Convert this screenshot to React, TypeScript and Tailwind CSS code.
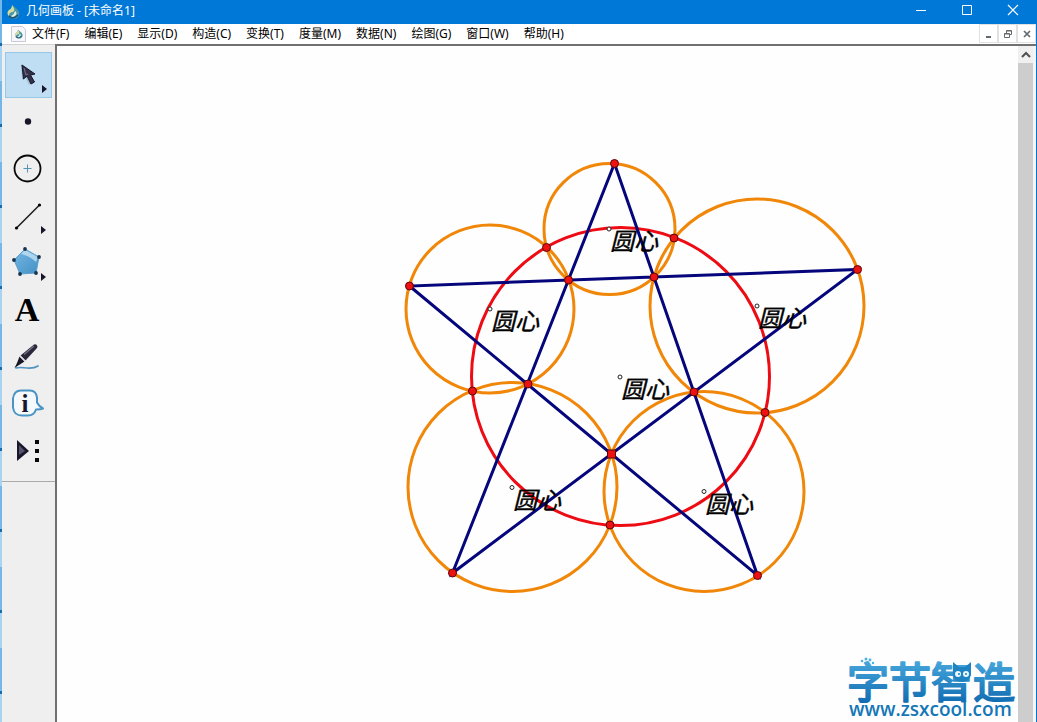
import React from "react";

const menus = ["文件(F)", "编辑(E)", "显示(D)", "构造(C)", "变换(T)", "度量(M)", "数据(N)", "绘图(G)", "窗口(W)", "帮助(H)"];

const circles = [
  { cx: 609.5, cy: 229, r: 65.5 },
  { cx: 490, cy: 309, r: 84 },
  { cx: 757, cy: 306, r: 107 },
  { cx: 512.5, cy: 487, r: 104.5 },
  { cx: 704, cy: 491.5, r: 100 },
];

const points = [
  [614.5, 163.5], [546.5, 247.5], [674, 238], [568.5, 280], [654, 277],
  [409.5, 286], [857.5, 269.5], [472.5, 391], [528, 384], [694, 392],
  [765, 412.5], [610, 525], [452.5, 573], [757.5, 575.5],
];

const centers = [
  [609, 229], [490, 309], [757, 306], [620, 377], [512, 487.5], [704, 491.5],
];

function Globe() {
  return (
    <g>
      <path d="M6 1Q10 4 12 6Q15 10 11 14Q7 16 3 13Q0 9 3 6Q6 5 6 1Z" fill="#4c95a8" />
      <path d="M6 1Q10 6 7 8Q3 8 3 12Q0 9 3 6Q6 5 6 1Z" fill="#d2df9c" />
      <path d="M9 7Q12 9 9 12Q6 14 5 12Q8 11 9 7Z" fill="#e1f0e5" />
      <path d="M3 12Q7 16 12 11" fill="none" stroke="#214f68" strokeWidth="1.3" />
    </g>
  );
}

const tools: { name: string; art: React.ReactNode }[] = [
  {
    name: "移动箭头工具",
    art: (
      <g>
        <path d="M16 12l1 16 3-3 4 8 4-2-4-7 5-1z" fill="#8badc2" opacity=".55" />
        <path d="M17 13l1.500 14 3.500-3 4 8 3.500-2-4-7 4.500-1z" fill="#33314a" stroke="#161526" strokeWidth="1" />
        <path d="M19 16l2 7 2-1" fill="none" stroke="#77748b" strokeWidth="1" />
        <path d="M37 33v8l5-4z" fill="#17172b" />
      </g>
    ),
  },
  { name: "点工具", art: <circle cx="23" cy="22.500" r="3.200" fill="#18172a" /> },
  {
    name: "圆工具",
    art: (
      <g fill="none">
        <circle cx="22.500" cy="22.500" r="13" stroke="#080808" strokeWidth="1.800" />
        <path d="M18.500 22.500h8m-4-4v8" stroke="#5793b2" strokeWidth="1" />
      </g>
    ),
  },
  {
    name: "线段直尺工具",
    art: (
      <g>
        <path d="M11.500 35L34.500 12" stroke="#161616" strokeWidth="1.400" />
        <circle cx="11.500" cy="35" r="1.600" />
        <circle cx="34.500" cy="12" r="1.600" />
        <path d="M36 33v8l5-4z" fill="#17172b" />
      </g>
    ),
  },
  {
    name: "多边形工具",
    art: (
      <g>
        <path d="M20 9L34 17l-3 16-16 1L9 20z" fill="url(#polygonBlue)" stroke="#5b9fce" strokeWidth="1" />
        <path d="M20 10l13 7-2 5q-8-7-15-8z" fill="#d1e9f8" opacity=".7" />
        {[[20, 9], [34, 17], [31, 33], [15, 34], [9, 20]].map(([x, y]) => (
          <circle key={x} cx={x} cy={y} r="1.900" fill="#17334d" />
        ))}
        <path d="M36 33v8l5-4z" fill="#17172b" />
      </g>
    ),
  },
  {
    name: "文本工具",
    art: (
      <text x="22" y="34" textAnchor="middle" className="fill-black font-['Liberation_Serif',serif] text-[34px] font-bold">A</text>
    ),
  },
  {
    name: "标记工具",
    art: (
      <g>
        <path d="M11 34q4-1 11 0 7 .500 11-2" fill="none" stroke="#5194bf" strokeWidth="1.700" strokeLinecap="round" />
        <path d="M29 10.500q2-1 3 1 1 1 0 2.500L20.500 26.500l-5-5z" fill="#2a283a" />
        <path d="M14.500 22.500l5 5-5.500 3.500-4.500 3 2.500-5z" fill="#171725" />
        <path d="M15 22l5 5" stroke="#e5e5ea" strokeWidth="1.200" />
        <path d="M19 20.500L29 12" stroke="#77748b" strokeWidth="1.200" />
      </g>
    ),
  },
  {
    name: "信息工具",
    art: (
      <g>
        <path d="M16 9.500h9q6 0 7 7v5q2 4 6 6-2 1-7 1-2 6-8 6h-6q-8 0-9-8v-9q1-8 8-8z" fill="#f6f9fb" stroke="#4994c5" strokeWidth="2" strokeLinejoin="round" />
        <text x="20" y="31" textAnchor="middle" className="fill-[#17172b] font-['Liberation_Serif',serif] text-[25px] font-bold">i</text>
      </g>
    ),
  },
  {
    name: "自定义工具",
    art: (
      <g fill="#17172b">
        <path d="M12 12v21l12-10z" />
        <path d="M14 17v10l6-4z" fill="#55536a" />
        <path d="M30 12h4v4h-4zm0 9h4v4h-4zm0 9h4v4h-4z" fill="#080808" />
      </g>
    ),
  },
];

function Construction() {
  return (
    <svg viewBox="57 46 960 676" className="block h-[676px] w-[960px] shrink-0" role="img" aria-label="五角星与共圆构造">
      <g fill="none" stroke="#f18708" strokeWidth="3">
        {circles.map((c) => <circle key={c.cx} {...c} />)}
      </g>
      <circle cx="620.500" cy="376.500" r="149" fill="none" stroke="#ee0c14" strokeWidth="3" />
      <path d="M614.500 163.500L452.500 573L857.500 269.500L409.500 286L757.500 575.500Z" fill="none" stroke="#06067c" strokeWidth="3" />
      {centers.map(([x, y]) => (
        <g key={x}>
          <circle cx={x} cy={y} r="2" fill="white" stroke="#222" strokeWidth="1" />
          <text x={x + 1} y={y + 21} className="fill-black stroke-black font-['Noto_Sans_CJK_SC',sans-serif] text-2xl font-normal italic" strokeWidth=".4">圆心</text>
        </g>
      ))}
      {points.map(([x, y]) => (
        <circle key={`${x}-${y}`} cx={x} cy={y} r="4" fill="#ed1111" stroke="#5b0709" strokeWidth="1" />
      ))}
      <rect x="607.500" y="450" width="8" height="8" fill="#ed1111" stroke="#5b0709" strokeWidth="1" />
    </svg>
  );
}

function Watermark() {
  return (
    <div className="absolute right-0 bottom-0 w-[174px] leading-none">
      <svg viewBox="0 0 174 68" className="block h-[68px] w-full overflow-visible" role="img" aria-label="字节智造">
        <defs>
          <linearGradient id="brandBlue" x1="0" y1="0" x2="0" y2="1">
            <stop stopColor="#56b6e7" />
            <stop offset="1" stopColor="#0763ab" />
          </linearGradient>
        </defs>
        <text x="3" y="44" className="fill-[url(#brandBlue)] stroke-[url(#brandBlue)] font-['Noto_Sans_CJK_SC',sans-serif] text-[42px] font-normal" strokeWidth="2" strokeLinejoin="round">字节智造</text>
        <g fill="#4bb2e2">
          <circle cx="18" cy="7" r="1.300" /><circle cx="22" cy="5" r="1.500" /><circle cx="26" cy="6" r="1.400" /><circle cx="29" cy="9" r="1.200" />
        </g>
        <g fill="#1f82c1">
          <path d="M109 8l6 5h6l6-5v13q-2 7-9 7t-9-7z" />
          <circle cx="114" cy="20" r="3" fill="#e8f7ff" /><circle cx="122" cy="20" r="3" fill="#e8f7ff" />
          <circle cx="115" cy="20" r="1" /><circle cx="122" cy="20" r="1" />
        </g>
        <text x="5" y="62" className="fill-[#1477b7] font-['Open_Sans',sans-serif] text-[19px] font-semibold">www.zsxcool.com</text>
      </svg>
    </div>
  );
}

function WindowIcon({ kind }: { kind: string }) {
  return (
    <svg viewBox="0 0 12 12" className="size-3" fill="none" stroke="currentColor">
      {kind === "最小化" && <path d="M1 6.500h10" />}
      {kind === "最大化" && <path d="M1.500 1.500h9v9h-9z" />}
      {kind === "关闭" && <path d="M1 1l10 10M11 1L1 11" strokeWidth="1.200" />}
    </svg>
  );
}

export default function App() {
  return (
    <div className="flex min-h-screen overflow-hidden bg-white font-['Noto_Sans','Noto_Sans_CJK_SC',sans-serif] text-xs text-black">
      <div className="w-0.5 shrink-0 bg-[repeating-linear-gradient(180deg,#75b8e8_0px,#75b8e8_43px,#176caa_43px,#176caa_46px,#a8d4f1_46px,#a8d4f1_81px)]" />
      <div className="flex min-w-0 flex-1 flex-col border-r border-[#0078d7]">
        <header className="flex h-6 shrink-0 items-center justify-between bg-[#0078d7] text-white">
          <div className="flex items-center gap-1 pl-1">
            <svg viewBox="0 0 16 16" className="size-4"><Globe /></svg>
            <h1 className="pb-0.5 font-normal">几何画板 - [未命名1]</h1>
          </div>
          <div className="flex h-full">
            {["最小化", "最大化", "关闭"].map((name) => (
              <button key={name} aria-label={name} className="flex h-full w-[46px] items-center justify-center pb-1">
                <WindowIcon kind={name} />
              </button>
            ))}
          </div>
        </header>
        <div className="flex h-5 shrink-0 items-center justify-between">
          <div className="flex items-center gap-1 pl-2">
            <svg viewBox="0 0 18 18" className="size-[18px]">
              <path d="M1.500 1.500h11l3 3v12h-14z" fill="#f7f7fb" stroke="#c7cad4" />
              <g transform="translate(4 4) scale(.65)"><Globe /></g>
            </svg>
            <nav className="flex items-center gap-[15px]">
              {menus.map((menu) => <button key={menu} className="whitespace-nowrap leading-5">{menu}</button>)}
            </nav>
          </div>
          <div className="flex h-full text-[#626a70]">
            {["最小化文档", "还原文档", "关闭文档"].map((name, index) => (
              <button key={name} aria-label={name} className="flex h-[19px] w-[19px] items-center justify-center border border-[#e1e1e1]">
                <svg viewBox="0 0 10 10" className="size-2.5" fill="none" stroke="currentColor">
                  {index === 0 && <path d="M2 8h5" strokeWidth="2" />}
                  {index === 1 && <path d="M1.500 4.500h5v4h-5zM3.500 4V1.500h5v4H7M3.500 2h5M1.500 5h5" />}
                  {index === 2 && <path d="M2 2l6 6M8 2L2 8" strokeWidth="1.700" />}
                </svg>
              </button>
            ))}
          </div>
        </div>
        <main className="flex min-h-0 flex-1">
          <aside className="w-[53px] shrink-0 border-t border-[#d2d2d2] bg-[#efeff0]">
            <svg className="absolute size-0" aria-hidden="true">
              <defs>
                <linearGradient id="polygonBlue" x1="0" y1="0" x2="1" y2="1">
                  <stop stopColor="#76b9e5" /><stop offset="1" stopColor="#438fc5" />
                </linearGradient>
              </defs>
            </svg>
            <div className="flex flex-col gap-px border-b border-[#aaaaaa] px-[3px] pt-[7px] pb-[7px]">
              {tools.map((tool, index) => (
                <button
                  key={tool.name}
                  aria-label={tool.name}
                  aria-pressed={index === 0}
                  className={index === 0 ? "h-[46px] w-[47px] bg-[#bfddf3] outline outline-[#98c8e7] -outline-offset-1" : "h-[46px] w-[47px]"}
                >
                  <svg viewBox="0 0 47 46" className="block h-[46px] w-[47px]">{tool.art}</svg>
                </button>
              ))}
            </div>
          </aside>
          <section className="relative flex min-w-0 flex-1 overflow-hidden border-t-2 border-l-2 border-[#707070] bg-[#fefefe]">
            <div className="relative min-w-0 flex-1 overflow-hidden">
              <Construction />
              <Watermark />
            </div>
            <div className="flex w-[15px] shrink-0 flex-col bg-[#cdcdcd]">
              <button aria-label="向上滚动" className="flex h-[17px] items-center justify-center bg-[#f0f0f0] text-[#505050]">
                <svg viewBox="0 0 10 8" className="h-2 w-2.5" fill="none" stroke="currentColor" strokeWidth="2"><path d="M1 6l4-4 4 4" /></svg>
              </button>
            </div>
            <div className="w-[3px] shrink-0 bg-[#f5f5f5]" />
          </section>
        </main>
      </div>
    </div>
  );
}
